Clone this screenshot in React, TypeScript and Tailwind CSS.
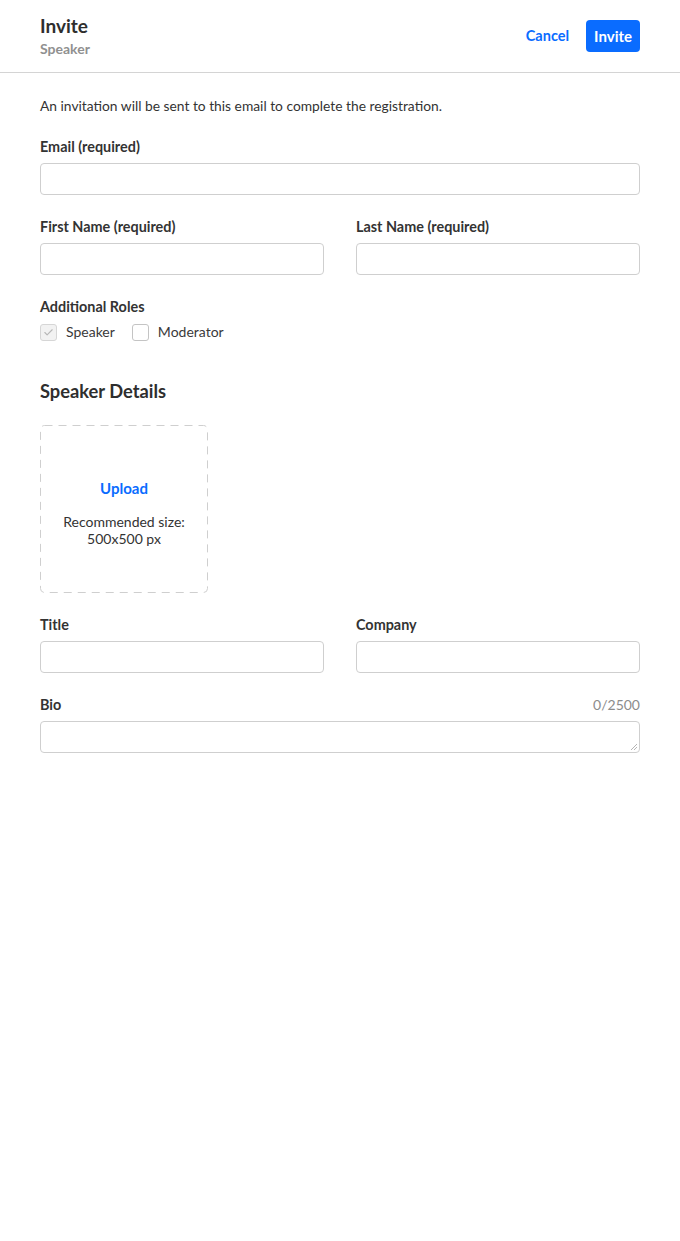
import { Check } from 'lucide-react'

function Field({ label, className = '' }: { label: string; className?: string }) {
  return (
    <div className={`flex flex-col ${className}`}>
      <label className="mb-2 text-[14.4px] font-bold leading-4 text-[#333333]">{label}</label>
      <input className="h-8 w-full rounded border border-[#cfcfcf] bg-white px-2 text-[14px] outline-none" />
    </div>
  )
}

function Checkbox({ label, checked, disabled }: { label: string; checked?: boolean; disabled?: boolean }) {
  return (
    <label className="flex items-center gap-[9px]">
      <span
        className={`flex h-[17px] w-[17px] items-center justify-center rounded-[3px] border ${
          disabled ? 'border-[#d6d6d6] bg-[#f2f2f2]' : 'border-[#c4c4c4] bg-white'
        }`}
      >
        {checked && <Check size={11} strokeWidth={2.5} className="text-[#b8b8b8]" />}
      </span>
      <span className="text-[14px] leading-5 text-[#3a3a3a]">{label}</span>
    </label>
  )
}

export default function App() {
  return (
    <div className="min-h-[1241px] bg-white font-['Lato',sans-serif] text-[#333333]">
      <header className="flex h-[73px] items-center justify-between border-b border-[#d4d4d4] px-10">
        <div className="flex flex-col pt-[1px]">
          <h1 className="text-[19px] font-bold leading-6 text-[#2e2e2e]">Invite</h1>
          <span className="text-[14px] font-bold leading-[22px] text-[#909090]">Speaker</span>
        </div>
        <div className="flex items-center gap-[17px]">
          <button className="text-[14.5px] font-bold text-[#0a6cff]">Cancel</button>
          <button className="h-8 rounded-[4px] bg-[#0a6cff] px-[8px] text-[15px] font-bold text-white">Invite</button>
        </div>
      </header>

      <main className="px-10">
        <p className="mt-[23px] text-[13.8px] leading-5 text-[#333333]">
          An invitation will be sent to this email to complete the registration.
        </p>

        <Field label="Email (required)" className="mt-[23px]" />

        <div className="mt-6 grid grid-cols-2 gap-8">
          <Field label="First Name (required)" />
          <Field label="Last Name (required)" />
        </div>

        <div className="mt-6">
          <div className="text-[14.4px] font-bold leading-4 text-[#333333]">Additional Roles</div>
          <div className="mt-[7px] flex items-center gap-[17px]">
            <Checkbox label="Speaker" checked disabled />
            <Checkbox label="Moderator" />
          </div>
        </div>

        <h2 className="mt-[37px] text-[18.3px] font-bold leading-6 text-[#2e2e2e]">Speaker Details</h2>

        <div className="relative mt-[22px] flex h-[168px] w-[168px] flex-col items-center pt-[53px]">
          <svg className="absolute inset-0" width="168" height="168">
            <rect
              x="0.5"
              y="0.5"
              width="167"
              height="167"
              rx="4"
              fill="none"
              stroke="#cfcfcf"
              strokeWidth="1"
              strokeDasharray="8 6"
            />
          </svg>
          <button className="text-[15px] font-bold leading-5 text-[#0a6cff]">Upload</button>
          <p className="mt-[15px] text-center text-[14px] leading-[17px] text-[#333333]">
            Recommended size:
            <br />
            500x500 px
          </p>
        </div>

        <div className="mt-6 grid grid-cols-2 gap-8">
          <Field label="Title" />
          <Field label="Company" />
        </div>

        <div className="mt-6 flex flex-col">
          <div className="mb-2 flex items-center justify-between">
            <label className="text-[14.4px] font-bold leading-4 text-[#333333]">Bio</label>
            <span className="text-[14px] leading-4 text-[#8c8c8c]">0/2500</span>
          </div>
          <div className="relative">
            <textarea
              rows={1}
              className="block h-[32px] w-full resize-none rounded border border-[#cfcfcf] px-2 text-[14px] outline-none"
            />
            <svg className="absolute bottom-[3px] right-[3px]" width="7" height="7" viewBox="0 0 7 7">
              <path d="M1 7 L7 1 M4 7 L7 4" stroke="#b5b5b5" strokeWidth="1" />
            </svg>
          </div>
        </div>
      </main>
    </div>
  )
}
